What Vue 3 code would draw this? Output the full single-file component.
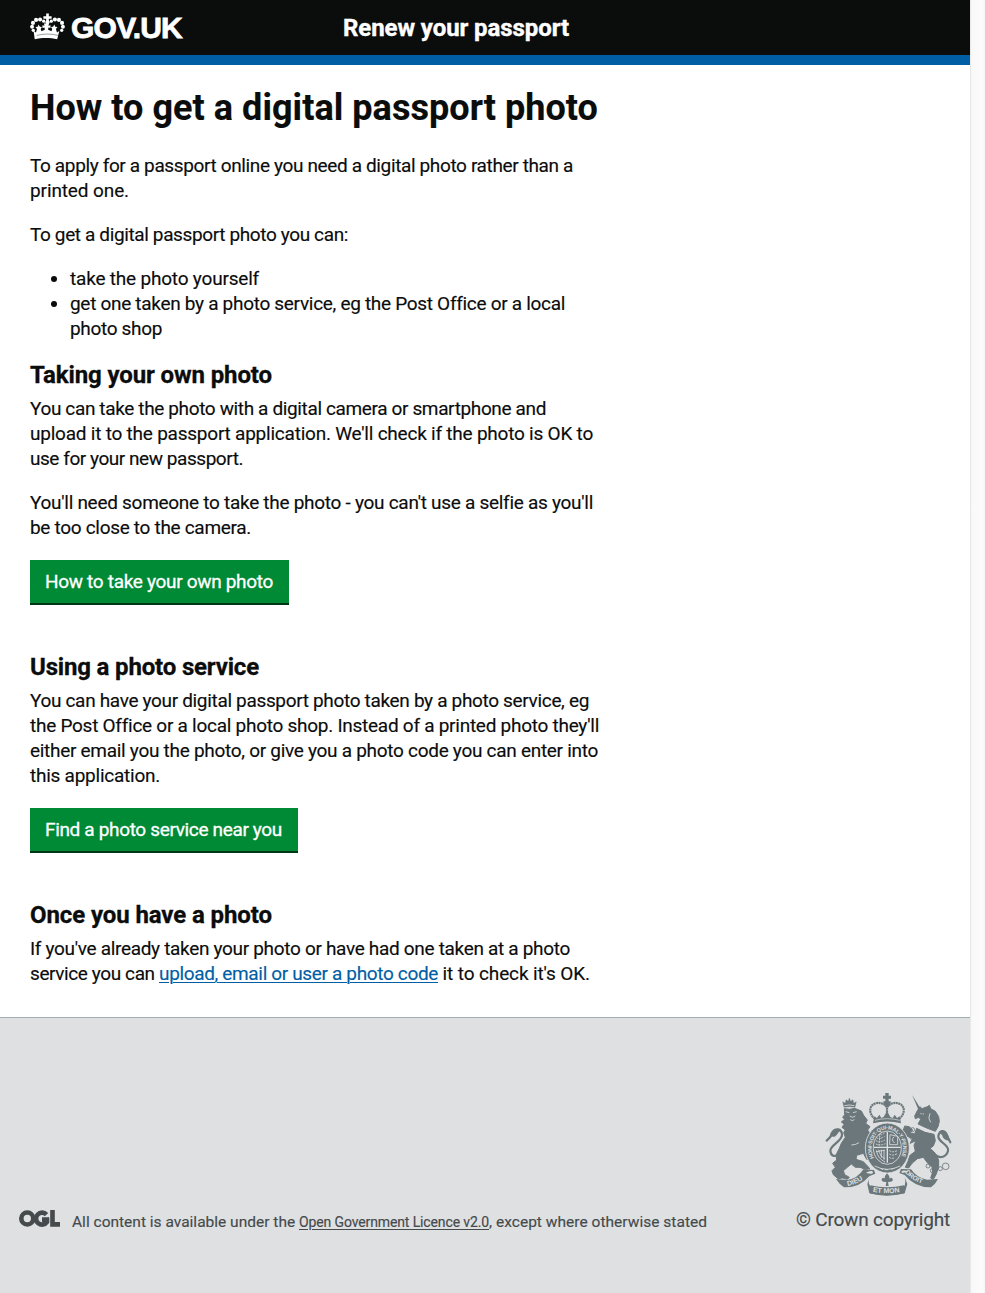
<script setup>
// Tracks a line of text so that it spans the given width in pixels.
const vFit = {
  mounted(el, { value }) {
    const apply = () => {
      el.style.letterSpacing = '0px'
      const n = el.textContent.length
      const natural = el.getBoundingClientRect().width
      el.style.letterSpacing = (value - natural) / n + 'px'
    }
    apply()
    document.fonts.ready.then(apply)
  },
}

const intro = [
  [
    ['To apply for a passport online you need a digital photo rather than a', 543],
    ['printed one.', 99],
  ],
  [['To get a digital passport photo you can:', 318]],
]

const options = [
  [['take the photo yourself', 189]],
  [
    ['get one taken by a photo service, eg the Post Office or a local', 495],
    ['photo shop', 92],
  ],
]

const sections = [
  {
    title: ['Taking your own photo', 242],
    paragraphs: [
      [
        ['You can take the photo with a digital camera or smartphone and', 516],
        ["upload it to the passport application. We'll check if the photo is OK to", 563],
        ['use for your new passport.', 213],
      ],
      [
        ["You'll need someone to take the photo - you can't use a selfie as you'll", 563],
        ['be too close to the camera.', 221],
      ],
    ],
    button: ['How to take your own photo', 228],
  },
  {
    title: ['Using a photo service', 229],
    paragraphs: [
      [
        ['You can have your digital passport photo taken by a photo service, eg', 559],
        ["the Post Office or a local photo shop. Instead of a printed photo they'll", 569],
        ['either email you the photo, or give you a photo code you can enter into', 568],
        ['this application.', 130],
      ],
    ],
    button: ['Find a photo service near you', 237],
  },
]
</script>

<template>
  <div class="window">
    <div class="page">
      <header class="header">
        <a class="brand">
          <svg class="crown" viewBox="0 0 34 27" aria-hidden="true">
            <g fill="#fff">
              <path d="M15.700 0.500h2.600v2.600h2.700v2.500h-2.700v2.500h-2.600V5.600h-2.700V3.100h2.700z" />
              <circle cx="17" cy="9" r="2" />
              <circle cx="13.300" cy="7.800" r="1.600" /><circle cx="20.700" cy="7.800" r="1.600" />
              <circle cx="9.800" cy="6.200" r="2" /><circle cx="24.200" cy="6.200" r="2" />
              <circle cx="5.900" cy="6.600" r="2" /><circle cx="28.100" cy="6.600" r="2" />
              <circle cx="2.900" cy="9.500" r="2" /><circle cx="31.100" cy="9.500" r="2" />
              <circle cx="2" cy="13.300" r="1.900" /><circle cx="32" cy="13.300" r="1.900" />
              <circle cx="3.200" cy="16.700" r="1.600" /><circle cx="30.800" cy="16.700" r="1.600" />
              <path d="M3.500 17.500l2.300 1.300 1-3.400-1.500-1.800 2.200-.4.800-2.200 1.300 2.200 2 .4-1.200 1.800.7 2.200 3.300-1.500-.3-2-2 .4v-2.600l2 .4-.6-2.200h5l-.6 2.200 2-.4v2.600l-2-.4-.3 2 3.300 1.500.7-2.200-1.200-1.800 2-.4 1.300-2.200.8 2.200 2.200.4-1.500 1.800 1 3.400 2.300-1.300-2.100 8c-6.500-1.700-15.300-1.700-21.800 0z" />
            </g>
            <path d="M6.500 21.700c6.500-1.800 14.500-1.800 21 0" fill="none" stroke="#0b0c0c" stroke-width=".4" />
          </svg>
          <span v-fit="111" class="wordmark">GOV.UK</span>
        </a>
        <a class="service"><span v-fit="226" class="line">Renew your passport</span></a>
      </header>

      <main class="content">
        <h1><span v-fit="568" class="line">How to get a digital passport photo</span></h1>
        <p v-for="(lines, i) in intro" :key="i">
          <span v-for="[text, width] in lines" :key="text" v-fit="width" class="line">{{ text }}</span>
        </p>
        <ul>
          <li v-for="(lines, i) in options" :key="i">
            <span v-for="[text, width] in lines" :key="text" v-fit="width" class="line">{{ text }}</span>
          </li>
        </ul>

        <section v-for="s in sections" :key="s.title[0]">
          <h2><span v-fit="s.title[1]" class="line">{{ s.title[0] }}</span></h2>
          <p v-for="(lines, i) in s.paragraphs" :key="i">
            <span v-for="[text, width] in lines" :key="text" v-fit="width" class="line">{{ text }}</span>
          </p>
          <a class="button"><span v-fit="s.button[1]" class="line">{{ s.button[0] }}</span></a>
        </section>

        <section>
          <h2><span v-fit="242" class="line">Once you have a photo</span></h2>
          <p>
            <span v-fit="540" class="line">If you've already taken your photo or have had one taken at a photo</span>
            <span class="line">
              <span v-fit="129" class="part">service you can </span><a v-fit="279" class="part link">upload, email or user a photo code</a><span v-fit="152" class="part"> it to check it's OK.</span>
            </span>
          </p>
        </section>
      </main>

      <footer class="footer">
        <div class="licence">
          <svg class="ogl" viewBox="0 0 41 17" aria-hidden="true">
            <g fill="none" stroke="#454a4d" stroke-width="4.600">
              <circle cx="8.300" cy="8.500" r="6" />
              <path d="M27.500 4.600A6 6 0 1 0 28 12V9.600h-5" />
              <path d="M33.500 0v14.400H41" />
            </g>
          </svg>
          <p>
            <span v-fit="227" class="part">All content is available under the </span><a v-fit="190" class="part ogl-link">Open Government Licence v2.0</a><span v-fit="218" class="part">, except where otherwise stated</span>
          </p>
        </div>
        <div class="copyright">
          <svg class="arms" viewBox="45 36 381 312" aria-hidden="true">
            <defs>
              <path id="garter" d="M192 234A47 56 0 1 1 268 240" />
              <path id="dieu" d="M113 318Q148 311 178 283" />
              <path id="mon" d="M188 335q44 9 90 0" />
              <path id="droit" d="M284 277Q313 309 358 316" />
            </defs>
            <g fill="#6b777b" stroke="#6b777b" stroke-width="3">
              <!-- lion -->
              <path d="M102 82L98 65l8 5 2-11 7 5 3-10 4 10 7-5 2 11 8-5-4 17q-16-4-33 0z" stroke-width="1" />
              <path d="M103 86Q120 90 134 85L154 93 162 108 172 120 167 130 180 140 173 150 182 165 178 180 187 200 183 215 188 228 180 240 170 238 160 220 140 226 138 238 160 245 172 258 180 266 166 268 150 262 136 262 124 252 112 262 100 272 104 284 118 292 112 298 98 294 84 296 70 284 66 272 76 262 68 250 80 240 78 225 88 205 94 190 106 172 101 158 106 150 96 142 103 132 94 126 104 118 98 112 104 104Z" />
              <!-- unicorn -->
              <path d="M306 44l26 42-6 5z" stroke-width="0" />
              <path d="M322 92L330 80 336 86 352 80 358 76 362 86 376 94 386 110 388 124 384 140 376 154 350 144 324 132 332 118 326 112 316 116 314 108Z" />
              <path d="M320 145L345 157 372 163 376 182 370 198 360 205 376 220 386 240 386 262 378 284 370 298 362 294 368 276 366 262 352 248 340 232 322 236 306 250 296 264 286 262 294 244 300 226 316 214 312 196 318 182 300 190 308 176 290 168 280 150 284 138 298 140 308 150 300 158 314 162Z" />
            </g>
            <!-- tails -->
            <g fill="none" stroke="#6b777b" stroke-width="6.500" stroke-linecap="round">
              <path d="M86 222c-14 12-24 4-25-10 0-17 35-28 35-48 0-17-19-19-27-6-4 8-7 14-19 24" />
              <path d="M378 226c12 10 31 5 36-13 6-19-31-26-29-45 2-14 16-20 23-7l13 26" />
            </g>
            <path d="M93 147c-19-7-30 4-34 22 9 2 16 3 21-4zM386 156c13-13 29-4 33 26-13-1-19-4-23-17z" fill="#6b777b" />
            <!-- crown -->
            <path d="M195 117c-20-16-19-41 2-47 14-4 27 2 34 12 7-10 20-16 34-12 21 6 22 31 2 47M231 76v24" fill="none" stroke="#6b777b" stroke-width="6.500" stroke-dasharray="6 1.500" />
            <path d="M226 39h10v8h7v9h-7v8h6q2 14-11 14t-11-14h6v-8h-7v-9h7zM189 130l4-21 8 5 7-10 6 10 7-3 10-18 10 18 7 3 6-10 7 10 8-5 4 21q-42-11-84 0z" fill="#6b777b" />
            <path d="M195 121q36-10 74 0" fill="none" stroke="#dee0e2" stroke-width="2" />
            <!-- garter and shield -->
            <ellipse cx="232" cy="204" rx="66" ry="75" fill="#6b777b" stroke="#dee0e2" stroke-width="2.500" />
            <ellipse cx="232" cy="203" rx="42" ry="50" fill="none" stroke="#dee0e2" stroke-width="2.500" />
            <text class="motto garter-text"><textPath href="#garter">HONI·SOIT·QUI·MAL·Y·PENSE</textPath></text>
            <g fill="none" stroke="#dee0e2" stroke-width="2.500">
              <path d="M232 155v93M192 202h80" stroke-width="4" />
              <path d="M199 173q9 7 25-4M198 182q12 7 27-2M198 192q14 6 28-1M205 164q5 5 18-5M210 160l-3 37" stroke-dasharray="5 3" />
              <path d="M240 164l23 5v25h-24zM252 170q-10 10 2 19" />
              <path d="M199 211q4 25 26 35M206 209q3 19 19 28M214 209v24M222 209v30M198 215l26-4" />
              <path d="M238 212q11 7 25-1M238 222q11 7 23-1M238 232q8 6 17 0" stroke-dasharray="6 3" />
              <path d="M194 258q38 20 76 0M212 265l7 4M224 269h10M244 268l9-4" />
            </g>
            <!-- ribbons -->
            <path d="M78 297l34 3q31-4 48-32l32 2 4 11-15 6-5 3q-27 33-74 32-14-9-24-25z" fill="#6b777b" />
            <path d="M384 297l-33 2q-29-4-48-31l-30-1-5 12 16 6q31 38 79 37 13-9 21-25z" fill="#6b777b" />
            <path d="M168 278q9-6 18-5 6 4 0 8-9 1-18-3M293 273q-9-3-16-1-6 4 0 6 9 1 16-5" fill="#dee0e2" />
            <path d="M177 293q-4 20 5 27 48 13 99 0 8-7 3-28l8 20-8 28q-54 14-106 0l-6-27z" fill="#6b777b" />
            <path d="M181 316q50 12 101 0l1 24q-51 12-103 0z" fill="#6b777b" />
            <text class="motto"><textPath href="#dieu">DIEU</textPath></text>
            <text class="motto"><textPath href="#mon">ET MON</textPath></text>
            <text class="motto droit"><textPath href="#droit">DROIT</textPath></text>
            <path d="M231 280q14 14 2 25 1-10 12-12 8 7-2 12l-9 1 2 12h-9l2-12-9-1q-9-5-2-12 11 2 12 12-12-11 1-25z" fill="#6b777b" />
            <!-- faces, mane and chain -->
            <g fill="none" stroke="#dee0e2" stroke-width="2.500">
              <path d="M107 95l11 3M129 98l11-3M119 108l9 4 8-4M121 119q6 6 12 0M103 77q15-4 30 0" />
              <path d="M331 101l12 1M326 141l17 9 16 5 17 3" stroke-dasharray="4 3" />
              <path d="M360 100q-8 15 2 27M147 188q-10 7-23 7" />
            </g>
            <g fill="none" stroke="#6b777b" stroke-width="2.500">
              <circle cx="308" cy="149" r="6" /><circle cx="305" cy="173" r="5" />
              <circle cx="354" cy="258" r="6" /><circle cx="367" cy="272" r="6" />
              <circle cx="391" cy="266" r="6" /><circle cx="407" cy="259" r="10" />
            </g>
          </svg>
          <a><span v-fit="154" class="line">© Crown copyright</span></a>
        </div>
      </footer>
    </div>
    <div class="gutter"></div>
  </div>
</template>

<style>
body {
  background: #fff;
}
</style>

<style scoped>
.window {
  display: flex;
  height: 1293px;
  overflow: hidden;
  font: 19px/25px Roboto, "Liberation Sans", sans-serif;
  font-variant-ligatures: none;
  color: #0b0c0c;
  -webkit-text-stroke: 0.15px currentColor;
}
.page {
  display: flex;
  flex-direction: column;
  width: 970px;
}
.gutter {
  box-sizing: border-box;
  flex: 1;
  border-left: 1px solid #e8e8e8;
  background: linear-gradient(90deg, #f8f8f8, #fcfcfc 80%, #f5f5f5);
}
.header {
  box-sizing: border-box;
  display: grid;
  grid-template-columns: 313px 1fr;
  height: 65px;
  padding: 0 30px;
  border-bottom: 10px solid #005ea5;
  background: #0b0c0c;
  color: #fff;
}
.brand {
  display: flex;
  align-items: center;
  gap: 6px;
  padding-bottom: 1px;
}
.crown {
  width: 35px;
  height: 28px;
}
.wordmark {
  font: 700 30px/34px "Liberation Sans", sans-serif;
  white-space: nowrap;
  -webkit-text-stroke: 0.8px #fff;
  padding-top: 2px;
}
.service {
  padding-top: 13px;
  font-size: 24px;
  line-height: 30px;
  font-weight: 700;
  -webkit-text-stroke: 0.4px #fff;
}
.content {
  box-sizing: border-box;
  height: 952px;
  padding: 23px 30px 0;
}
.line {
  display: table;
  white-space: nowrap;
}
.part {
  display: inline-block;
  white-space: pre;
}
h1 {
  margin: 0 0 25px;
  font-size: 36px;
  line-height: 40px;
  font-weight: 700;
}
h2 {
  margin: 19px 0 6px;
  font-size: 24px;
  line-height: 30px;
  font-weight: 700;
  -webkit-text-stroke: 0.3px currentColor;
}
p {
  margin: 0 0 19px;
}
ul {
  margin: 0;
  padding: 0 0 0 40px;
}
.button {
  display: block;
  width: fit-content;
  height: 43px;
  margin: 20px 0 49px;
  padding: 0 16px 0 15px;
  box-shadow: 0 2px 0 #003618;
  background: #008a35;
  color: #fff;
  line-height: 43px;
  -webkit-text-stroke: 0.3px #fff;
}
.link {
  color: #005ea5;
  text-decoration: underline;
  text-underline-offset: 2px;
  text-decoration-thickness: 1px;
}
.footer {
  box-sizing: border-box;
  display: flex;
  justify-content: space-between;
  flex: 1;
  padding: 74px 20px 0 19px;
  border-top: 1px solid #a1acb2;
  background: #dee0e2;
  color: #454a4c;
}
.licence {
  display: flex;
  gap: 12px;
  padding-top: 118px;
  font-size: 15.5px;
  line-height: 24px;
}
.licence p {
  margin: 0;
}
.ogl {
  width: 41px;
  height: 17px;
}
.ogl-link {
  font-size: 14px;
  text-decoration: underline;
  text-underline-offset: 2px;
}
.copyright {
  display: flex;
  flex-direction: column;
  align-items: flex-end;
}
.arms {
  width: 127px;
  height: 104px;
  margin: 0 -2px 11px 0;
}
.motto {
  fill: #dee0e2;
  font: 700 21px "Liberation Sans", sans-serif;
  -webkit-text-stroke: 0;
}
.droit {
  font-size: 20px;
}
.garter-text {
  font-size: 16px;
  letter-spacing: -0.6px;
}
</style>
